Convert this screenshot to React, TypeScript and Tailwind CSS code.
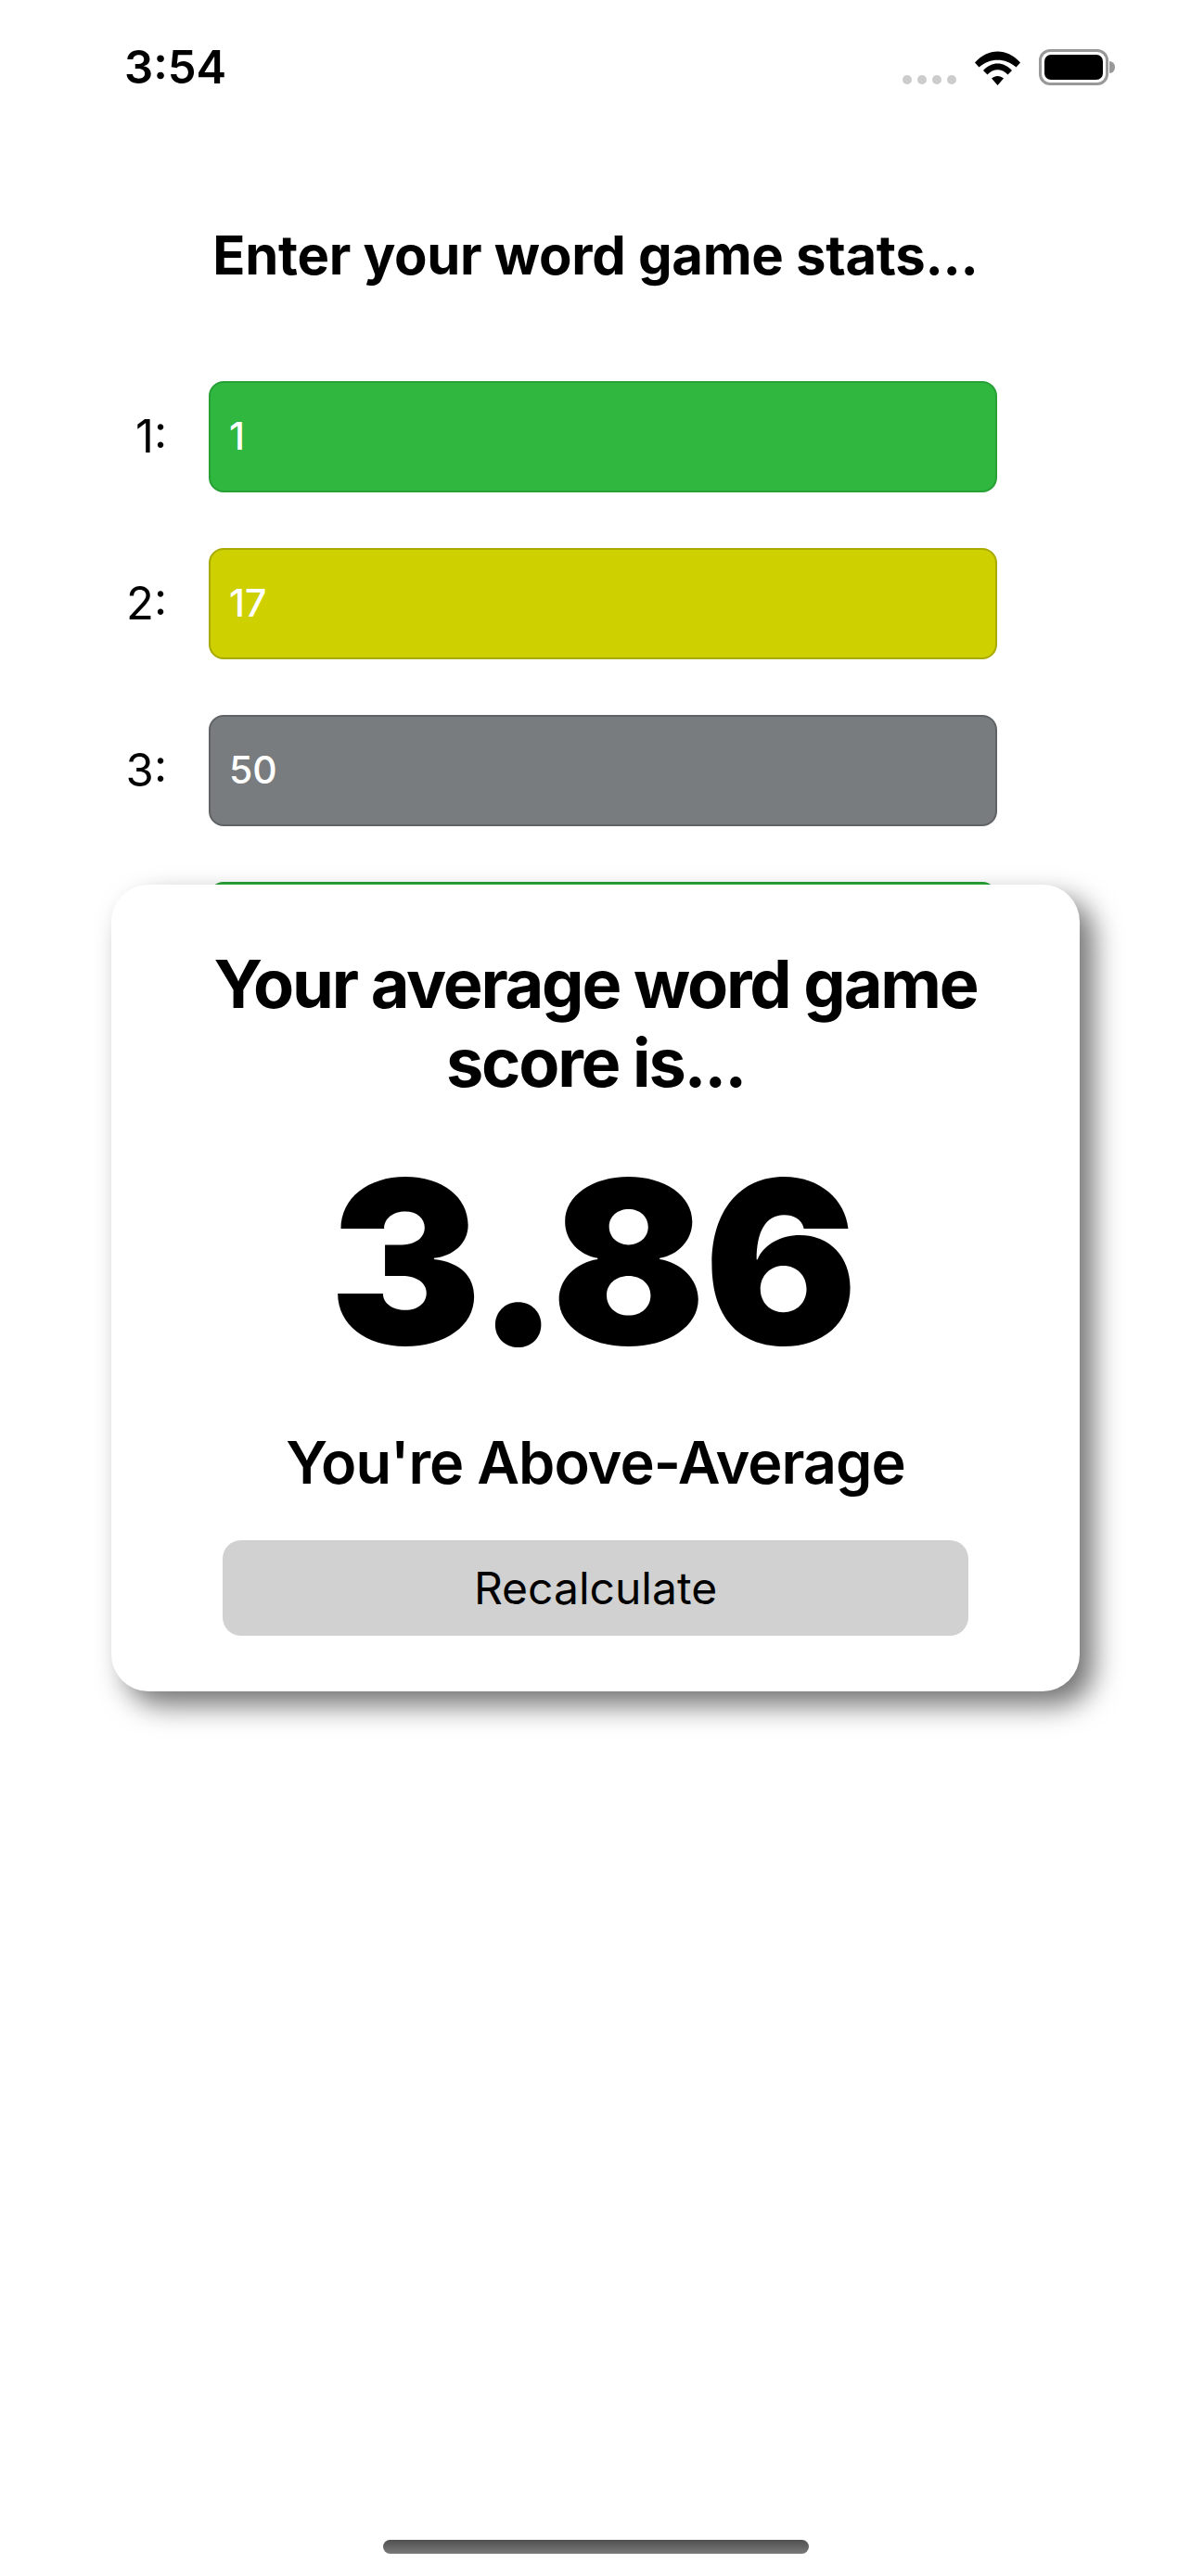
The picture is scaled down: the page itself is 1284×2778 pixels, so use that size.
import React from 'react';

const rows = [
    { label: '1:', value: '1', bg: 'bg-[#2fb73f]', border: 'border-[#27a036]' },
    { label: '2:', value: '17', bg: 'bg-[#ced000]', border: 'border-[#a8aa00]' },
    { label: '3:', value: '50', bg: 'bg-[#787c7e]', border: 'border-[#606365]' },
];

const StatusBar = () => (
    <div className="flex items-start justify-between pl-[134px] pr-[82px] pt-[43px]">
        <span className="text-[49px] leading-[60px] font-semibold text-black">3:54</span>
        <div className="flex items-end pt-[10px]">
            {/* no signal dots */}
            <div className="flex gap-[6px] mb-[1px]">
                <div className="w-[10px] h-[10px] rounded-full bg-[#cccccc]" />
                <div className="w-[10px] h-[10px] rounded-full bg-[#cccccc]" />
                <div className="w-[10px] h-[10px] rounded-full bg-[#cccccc]" />
                <div className="w-[10px] h-[10px] rounded-full bg-[#cccccc]" />
            </div>
            <svg className="ml-[20px]" width="49" height="37" viewBox="0 0 49 37">
                <path d="M0 12.5 C14 -3.5 35 -3.5 49 12.5 L44.5 17.5 C33 7 16 7 4.5 17.5 Z" fill="#000" />
                <path d="M9 21 C18 11 31 11 40 21 L35.5 25.5 C29 18.5 20 18.5 13.5 25.5 Z" fill="#000" />
                <path d="M18 29.5 C22 26 27 26 31 29.5 L24.5 37 Z" fill="#000" />
            </svg>
            <div className="ml-[20px] flex items-center">
                <div className="w-[75px] h-[39px] rounded-[12px] border-[3px] border-[#999999] p-[3px]">
                    <div className="w-full h-full rounded-[7px] bg-black" />
                </div>
                <div className="w-[6px] h-[13px] ml-[1px] rounded-r-full bg-[#999999]" />
            </div>
        </div>
    </div>
);

const App: React.FC = () => {
    return (
        <div className="relative w-[1284px] h-[2778px] overflow-hidden bg-white text-black font-['Inter',sans-serif]">
            <StatusBar />

            <h1 className="mt-[136px] text-center text-[58px] leading-[72px] font-bold tracking-[-0.3px]">Enter your word game stats...</h1>

            <div className="mt-[100px] flex flex-col gap-[60px] pl-[130px]">
                {rows.map((row) => (
                    <div key={row.label} className="flex items-center">
                        <span className="w-[50px] text-right text-[49px] font-normal">{row.label}</span>
                        <div className={`ml-[45px] w-[850px] h-[120px] rounded-[16px] border-2 ${row.bg} ${row.border} flex items-center pl-[20px]`}>
                            <span className="text-[41px] font-[550] text-white">{row.value}</span>
                        </div>
                    </div>
                ))}
                <div className="flex items-center">
                    <div className="ml-[95px] w-[850px] h-[120px] rounded-[16px] border-2 bg-[#2fb73f] border-[#27a036]" />
                </div>
            </div>

            {/* result card */}
            <div className="absolute left-[120px] top-[954px] w-[1044px] h-[870px] rounded-[40px] bg-white shadow-[15px_15px_30px_rgba(0,0,0,0.55)] flex flex-col items-center pt-[64px]">
                <h2 className="w-[900px] text-center text-[72px] leading-[85px] font-bold tracking-[-2.2px]">Your average word game score is...</h2>
                <div className="mt-[23px] mr-[6px] text-[246px] leading-[300px] font-black tracking-[-2px]">3.86</div>
                <div className="mt-[28px] text-[63px] leading-[76px] font-semibold tracking-[-1px]">You're Above-Average</div>
                <button className="mt-[46px] w-[804px] h-[103px] rounded-[20px] bg-[#d1d1d1] text-[48px] font-normal">Recalculate</button>
            </div>

            {/* home indicator */}
            <div className="absolute left-[413px] top-[2739px] w-[459px] h-[15px] rounded-full bg-linear-to-b from-[#505050] to-[#7a7a7a]" />
        </div>
    );
};

export default App;
